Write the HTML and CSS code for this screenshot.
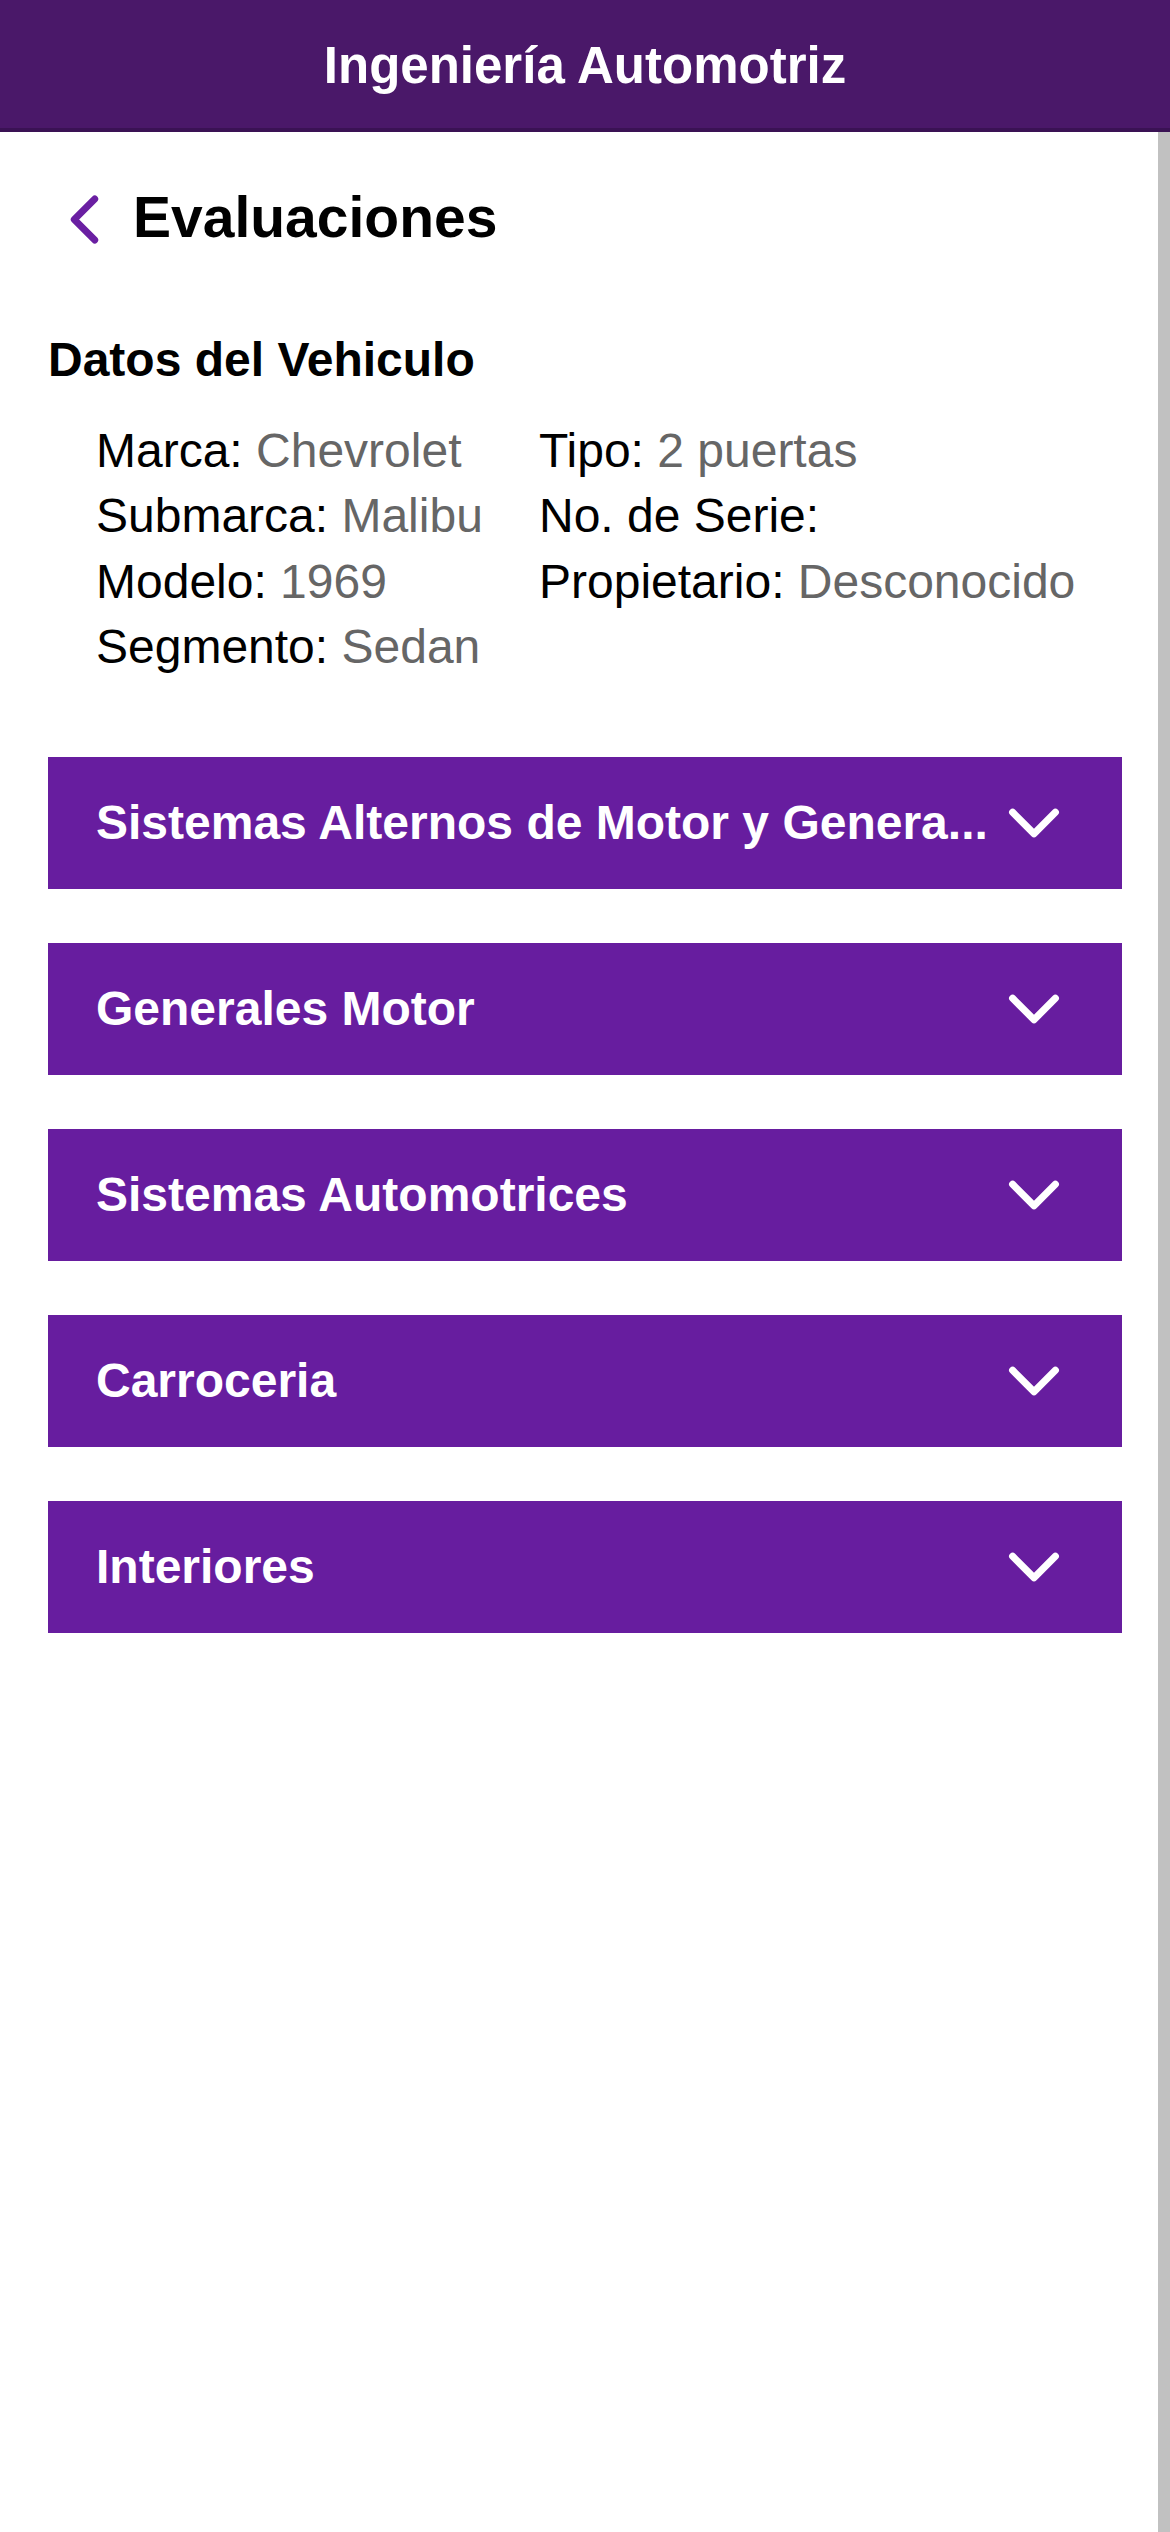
FILE: index.html
```html
<!DOCTYPE html>
<html lang="es">
<head>
<meta charset="utf-8">
<title>Ingeniería Automotriz</title>
<link rel="stylesheet" href="styles.css">
</head>
<body>
<header class="topbar">
  <h1 class="topbar-title">Ingeniería Automotriz</h1>
</header>
<main class="content">
  <div class="page-title">
    <svg class="back-icon" viewBox="0 0 512 512" aria-hidden="true"><path d="M328 112L184 256l144 144" fill="none" stroke="currentColor" stroke-linecap="round" stroke-linejoin="round" stroke-width="48"/></svg>
    <h2 class="page-title-text">Evaluaciones</h2>
  </div>

  <section class="vehicle">
    <h3 class="vehicle-heading">Datos del Vehiculo</h3>
    <div class="vehicle-grid">
      <div class="vehicle-col first">
        <div class="field">Marca: <span class="value">Chevrolet</span></div>
        <div class="field">Submarca: <span class="value">Malibu</span></div>
        <div class="field">Modelo: <span class="value">1969</span></div>
        <div class="field">Segmento: <span class="value">Sedan</span></div>
      </div>
      <div class="vehicle-col">
        <div class="field">Tipo: <span class="value">2 puertas</span></div>
        <div class="field">No. de Serie: <span class="value"></span></div>
        <div class="field">Propietario: <span class="value">Desconocido</span></div>
      </div>
    </div>
  </section>

  <div class="accordion">
    <div class="acc-item">
      <span class="acc-label">Sistemas Alternos de Motor y Genera...</span>
      <svg class="acc-icon" viewBox="0 0 512 512" aria-hidden="true"><path d="M112 184l144 144 144-144" fill="none" stroke="currentColor" stroke-linecap="round" stroke-linejoin="round" stroke-width="48"/></svg>
    </div>
    <div class="acc-item">
      <span class="acc-label">Generales Motor</span>
      <svg class="acc-icon" viewBox="0 0 512 512" aria-hidden="true"><path d="M112 184l144 144 144-144" fill="none" stroke="currentColor" stroke-linecap="round" stroke-linejoin="round" stroke-width="48"/></svg>
    </div>
    <div class="acc-item">
      <span class="acc-label">Sistemas Automotrices</span>
      <svg class="acc-icon" viewBox="0 0 512 512" aria-hidden="true"><path d="M112 184l144 144 144-144" fill="none" stroke="currentColor" stroke-linecap="round" stroke-linejoin="round" stroke-width="48"/></svg>
    </div>
    <div class="acc-item">
      <span class="acc-label">Carroceria</span>
      <svg class="acc-icon" viewBox="0 0 512 512" aria-hidden="true"><path d="M112 184l144 144 144-144" fill="none" stroke="currentColor" stroke-linecap="round" stroke-linejoin="round" stroke-width="48"/></svg>
    </div>
    <div class="acc-item">
      <span class="acc-label">Interiores</span>
      <svg class="acc-icon" viewBox="0 0 512 512" aria-hidden="true"><path d="M112 184l144 144 144-144" fill="none" stroke="currentColor" stroke-linecap="round" stroke-linejoin="round" stroke-width="48"/></svg>
    </div>
  </div>
</main>
<div class="scrollbar"></div>
</body>
</html>
```
FILE: styles.css
```css
* { box-sizing: border-box; }

html, body {
  margin: 0;
  padding: 0;
  background: #ffffff;
}

body {
  font-family: "Liberation Sans", Arial, Helvetica, sans-serif;
  color: #000000;
  min-height: 2532px;
  position: relative;
}

.topbar {
  height: 132px;
  background: #4a1869;
  border-bottom: 4px solid #3a1254;
  display: flex;
  align-items: center;
  justify-content: center;
}

.topbar-title {
  margin: 0;
  color: #ffffff;
  font-size: 51px;
  font-weight: 700;
  line-height: 60px;
  padding-top: 4px;
}

.content {
  padding: 50px 48px 0 48px;
}

.page-title {
  display: flex;
  align-items: center;
  height: 74px;
  gap: 12px;
}

.back-icon {
  width: 73px;
  height: 73px;
  color: #6a1fa2;
  flex: none;
}

.page-title-text {
  margin: 0;
  font-size: 57px;
  font-weight: 700;
  line-height: 70px;
  padding-bottom: 4px;
}

.vehicle {
  margin-top: 76px;
}

.vehicle-heading {
  margin: 0;
  font-size: 48px;
  font-weight: 700;
  line-height: 56px;
}

.vehicle-grid {
  display: grid;
  grid-template-columns: 443px auto;
  margin-top: 30px;
  padding-left: 48px;
}

.field {
  font-size: 48px;
  line-height: 65.3px;
  white-space: nowrap;
}

.value {
  color: #666666;
}

.accordion {
  margin-top: 78px;
  display: flex;
  flex-direction: column;
  gap: 54px;
}

.acc-item {
  height: 132px;
  background: #671d9f;
  color: #ffffff;
  display: flex;
  align-items: center;
  padding: 0 50px 0 48px;
  gap: 3px;
}

.acc-label {
  flex: 1;
  min-width: 0;
  font-size: 48px;
  font-weight: 700;
  line-height: 56px;
  white-space: nowrap;
}

.acc-icon {
  width: 76px;
  height: 76px;
  flex: none;
  color: #ffffff;
}

.scrollbar {
  position: absolute;
  top: 132px;
  right: 0;
  width: 12px;
  height: 2400px;
  background: #c1c1c1;
}
```
